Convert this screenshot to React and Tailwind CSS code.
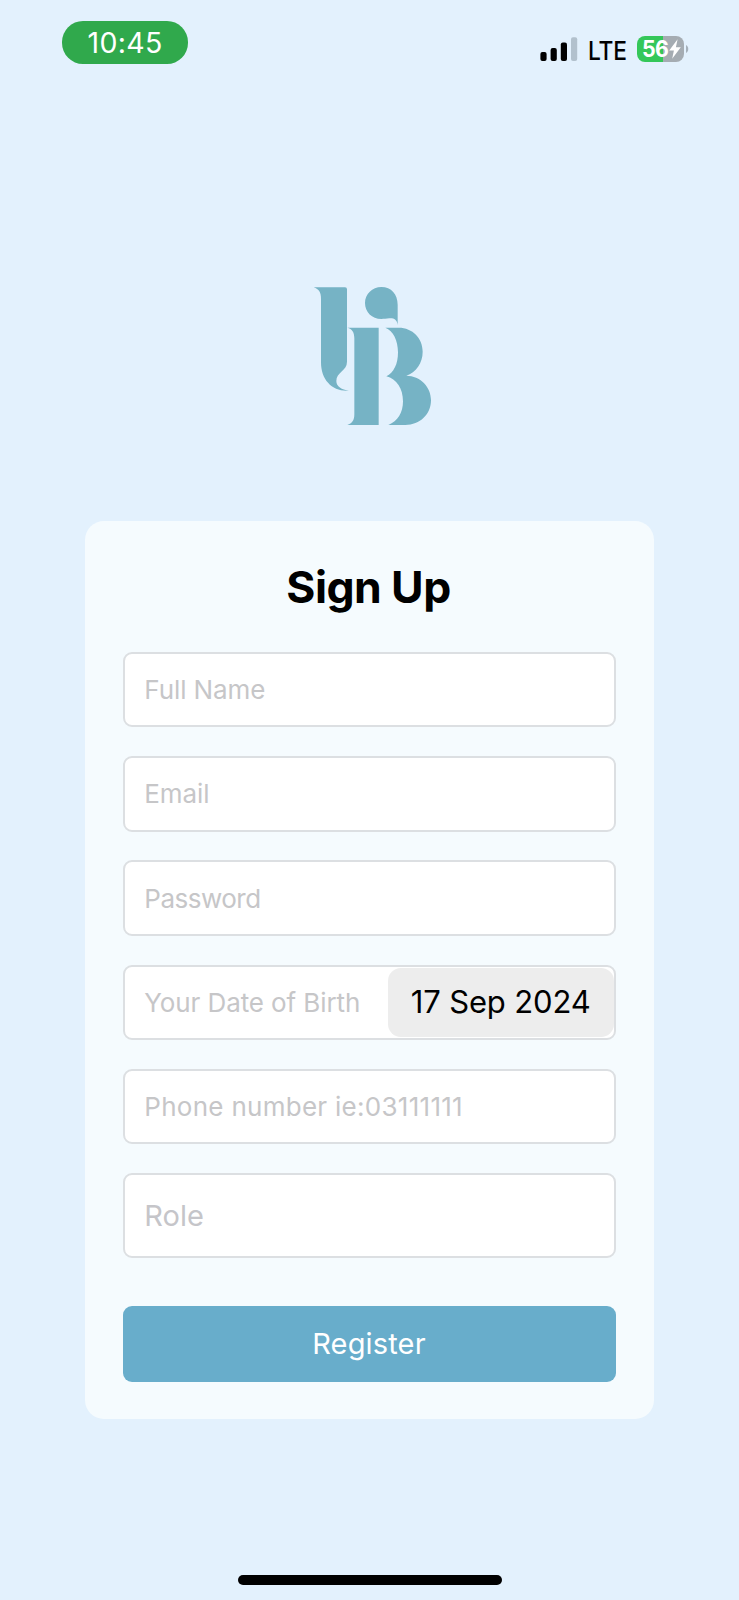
function StatusBar() {
  return (
    <header className="flex h-[80px] items-start justify-between pl-[62px] pr-[50px] pt-[20px]">
      <div className="mt-px flex h-[43px] w-[126px] items-center justify-center rounded-[21px] bg-[#30a94c] pt-px text-[28.5px] leading-none tracking-[0.3px] text-white">
        10:45
      </div>
      <div className="flex items-start pt-[16px]">
        <svg className="mt-[1px] h-[24px] w-[38px]" viewBox="0 0 38 24">
          <rect x="0.4" y="15" width="6.2" height="9" rx="2" fill="#000" />
          <rect x="10.6" y="11" width="6.2" height="13" rx="2" fill="#000" />
          <rect x="20.8" y="5.5" width="6.2" height="18.5" rx="2" fill="#000" />
          <rect x="31" y="0.2" width="6.2" height="23.8" rx="2" fill="#b2c1cd" />
        </svg>
        <span className="ml-[9.5px] mt-[1px] w-[49.5px] origin-left scale-x-[0.91] text-[25px] font-medium leading-[28px] tracking-[-0.2px] text-black">
          LTE
        </span>
        <div className="flex h-[26px] w-[47px] items-center rounded-[8px] bg-[linear-gradient(90deg,#34c759_0_56%,#a5acb2_56%)] pl-[5px]">
          <span className="w-[26.5px] origin-left scale-x-[0.93] text-[23px] font-bold leading-none tracking-[-0.6px] text-white">56</span>
          <svg className="h-[20px] w-[12px] shrink-0" viewBox="0 0 12 20">
            <path d="M8.6 0.3 0.2 11.4h4.7L3.2 19.7 11.8 8.2H6.9Z" fill="#fff" />
          </svg>
        </div>
        <svg className="ml-[2px] mt-[9px] h-[8px] w-[3px]" viewBox="0 0 3 8">
          <path d="M0 0C3 1.5 3 6.5 0 8Z" fill="#a5b0ba" />
        </svg>
      </div>
    </header>
  );
}

function Logo() {
  return (
    <svg className="ml-[300px] mt-[195px] h-[160px] w-[145px]" viewBox="0 0 435 480" fill="#76b3c5">
      <path d="M41 37H135Q141 37 141 43V260C141 288 109 291 109 318C109 334 125 345 147 347C98 351 63 316 63 262V72C63 52 57 43 41 37Z" />
      <path d="M142 158H236V450H142C156 446 163 436 163 418V190C163 171 156 162 142 158Z" />
      <path d="M293 150C291 134 282 129 268 130C259 131 252 132 244 132C216 132 195 111 195 84C195 57 217 36 244 36C274 36 293 58 293 89Z" />
      <path d="M256 158H296C338 158 368 190 368 230C368 264 348 292 319 302C361 303 393 335 393 376C393 418 360 450 316 450H265C293 439 309 413 309 379C309 341 290 312 259 304C281 293 294 268 294 232C294 196 280 168 256 158Z" />
    </svg>
  );
}

function Field({ children, textClass = "", className = "", extra }) {
  return (
    <div className={`flex shrink-0 items-center justify-between rounded-[9px] border-2 border-[#dcdfe2] bg-white pl-[19px] ${className || "mb-[28.8px] h-[75.4px]"}`}>
      <span className={`whitespace-nowrap ${textClass || "text-[26px] tracking-[-0.1px] text-[#c6c6c8]"}`}>{children}</span>
      {extra}
    </div>
  );
}

export default function App() {
  return (
    <div className="flex h-[1600px] w-[739px] flex-col overflow-hidden bg-[#e3f1fd] font-['Inter',sans-serif]">
      <StatusBar />
      <Logo />
      <main className="ml-[85.3px] mt-[86.4px] flex h-[898px] w-[568.4px] shrink-0 flex-col rounded-[19px] bg-[#f5fbfe] px-[38px] pt-[38.6px]">
        <h1 className="mb-[38px] h-[54px] pr-[2px] text-center text-[44.5px] font-bold leading-[55px] tracking-[-0.55px] text-black">
          Sign Up
        </h1>
        <Field>Full Name</Field>
        <Field>Email</Field>
        <Field textClass="text-[26px] tracking-[-0.5px] text-[#c6c6c8]">Password</Field>
        <Field
          extra={
            <button className="h-[69px] w-[226px] shrink-0 rounded-[13px] bg-[#ededed] text-center text-[31px] tracking-[-0.15px] text-black">
              17 Sep 2024
            </button>
          }
        >
          Your Date of Birth
        </Field>
        <Field textClass="text-[26px] tracking-[0.28px] text-[#c6c6c8]">Phone number ie:03111111</Field>
        <Field className="mb-[47.5px] h-[85.5px]" textClass="text-[29px] text-[#c5c5c9]">Role</Field>
        <button className="h-[76px] rounded-[9px] bg-[#68adcb] pb-px pr-px text-[29px] tracking-[0.15px] text-white">Register</button>
      </main>
      <div className="ml-[238px] mt-[155.6px] h-[10px] w-[263.5px] shrink-0 rounded-full bg-black" />
    </div>
  );
}
